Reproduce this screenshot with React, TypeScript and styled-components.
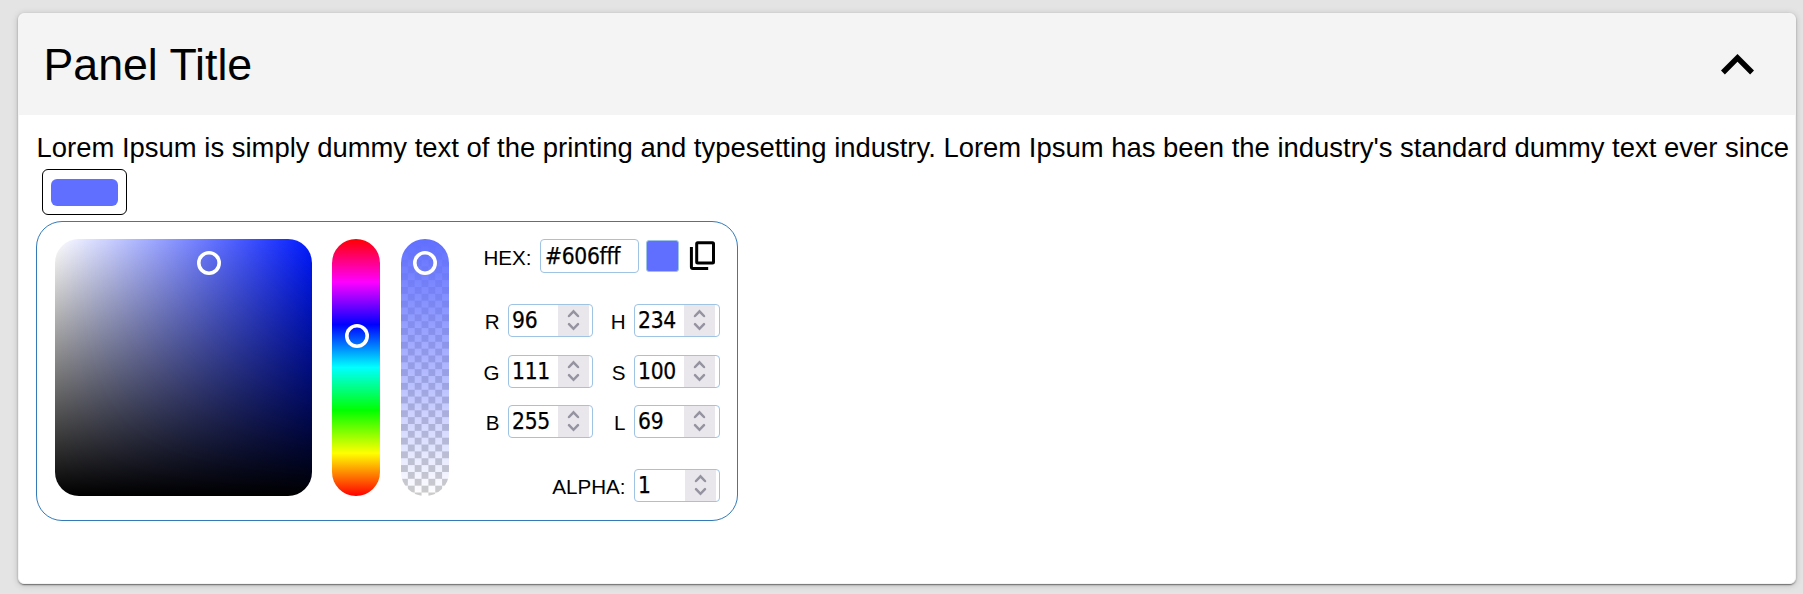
import React from "react";
import styled, { createGlobalStyle } from "styled-components";

const Global = createGlobalStyle`
  * { box-sizing: border-box; }
  html, body { margin: 0; background: #e4e4e4; }
  body { font-family: "Liberation Sans", Arial, sans-serif; color: #000; overflow: hidden; }
`;
const Page = styled.main`
  height: 594px;
  padding: 13px 7px 10px 18px;
`;
const Panel = styled.section`
  height: 571px;
  border: 1px solid #f4f4f4;
  border-radius: 6px;
  background: #fff;
  overflow: hidden;
  box-shadow: 0 4px 1px -3px rgba(0,0,0,.25), 0 1px 2px rgba(0,0,0,.3), 0 1px 7px rgba(0,0,0,.18);
`;
const Header = styled.header`
  height: 101px;
  background: #f4f4f4;
  display: flex;
  align-items: center;
  justify-content: space-between;
  padding: 0 41px 0 24px;
`;
const Title = styled.h1`
  margin: 0;
  padding-left: 0.5px;
  font-size: 44.7px;
  line-height: 50px;
  font-weight: 400;
`;
const Body = styled.div`
  padding: 17px 0 0 17px;
`;
const Text = styled.p`
  margin: 0;
  padding-left: 0.6px;
  font-size: 27.44px;
  line-height: 32px;
  white-space: nowrap;
`;
const ColorButton = styled.button`
  display: flex;
  width: 85px;
  height: 46px;
  margin: 5px 0 6px 6px;
  padding: 9px 8px;
  border: 1px solid #000;
  border-radius: 6px;
  background: #fff;
`;
const ButtonColor = styled.span`
  width: 67px;
  height: 27px;
  border-radius: 6px;
  background: #606fff;
`;
const Picker = styled.div`
  display: flex;
  width: 702px;
  height: 300px;
  padding: 17px 17px 17px 18px;
  border: 1px solid #337ab7;
  border-radius: 26px;
`;
const Track = styled.div<{ $width: number; $gap?: number; $bg: string }>`
  position: relative;
  flex: none;
  width: ${(p) => p.$width}px;
  height: 257px;
  margin-left: ${(p) => p.$gap ?? 0}px;
  border-radius: 24px;
  background: ${(p) => p.$bg};
`;
const Handle = styled.span<{ $x: number; $y: number }>`
  position: absolute;
  left: ${(p) => p.$x - 12.2}px;
  top: ${(p) => p.$y - 12.2}px;
  width: 24.4px;
  height: 24.4px;
  box-shadow: inset 0 0 0 3.6px #fff;
  border-radius: 50%;
`;
const Fields = styled.div`
  flex: 1;
  display: flex;
  flex-direction: column;
`;
const Row = styled.div<{ $mt?: number; $height?: number }>`
  display: flex;
  justify-content: flex-end;
  align-items: center;
  height: ${(p) => p.$height ?? 33}px;
  margin-top: ${(p) => p.$mt ?? 0}px;
`;
const Label = styled.label<{ $width?: number; $drop?: number }>`
  width: ${(p) => (p.$width ? p.$width + "px" : "auto")};
  margin-right: 8.5px;
  padding-top: ${(p) => p.$drop ?? 3}px;
  text-align: right;
  font-size: 20.6px;
  line-height: 24px;
`;
const Box = styled.div<{ $width: number; $height?: number; $left?: number; $right?: number }>`
  display: flex;
  align-items: center;
  justify-content: space-between;
  width: ${(p) => p.$width}px;
  height: ${(p) => p.$height ?? 33}px;
  padding-left: ${(p) => p.$left ?? 3}px;
  padding-right: ${(p) => p.$right ?? 3}px;
  border: 1px solid #9fc3e3;
  border-radius: 4px;
  background: #fff;
  font: 22.6px/31px "DejaVu Sans Condensed", "DejaVu Sans", sans-serif;
  font-stretch: condensed;
  letter-spacing: -0.3px;
  -webkit-text-stroke: 0.25px #000;
`;
const Spinner = styled.span`
  display: flex;
  flex: none;
  width: 31px;
  height: 31px;
  background: #e9e7ec;
`;
const Swatch = styled.span`
  width: 33px;
  height: 32px;
  margin: 0 10px 0 7px;
  border: 1px solid #9fc3e3;
  border-radius: 3px;
  background: #606fff;
`;
const CopyIcon = styled.svg`
  flex: none;
  margin-right: 4px;
`;

const NumberField = ({ label, value, width, right }: { label: string; value: string; width: number; right?: number }) => (
  <>
    <Label $width={label.length > 1 ? undefined : 32.5}>{label}</Label>
    <Box $width={width} $right={right}>
      {value}
      <Spinner>
        <svg width="31" height="31" viewBox="0 0 31 31" fill="none" stroke="#9693a1" strokeWidth="2.5" strokeLinecap="round">
          <path d="M11 11l4.5-4.6L20 11M11 19.2l4.5 4.6 4.5-4.6" />
        </svg>
      </Spinner>
    </Box>
  </>
);

const rows = [
  ["R", "96", "H", "234"],
  ["G", "111", "S", "100"],
  ["B", "255", "L", "69"],
];

export default function App() {
  return (
    <Page>
      <Global />
      <Panel>
        <Header>
          <Title>Panel Title</Title>
          <svg width="33" height="20.4" viewBox="6 8 12 7.41">
            <path d="M7.41 15.41 12 10.83l4.59 4.58L18 14l-6-6-6 6z" />
          </svg>
        </Header>
        <Body>
          <Text>Lorem Ipsum is simply dummy text of the printing and typesetting industry. Lorem Ipsum has been the industry's standard dummy text ever since</Text>
          <ColorButton><ButtonColor /></ColorButton>
          <Picker>
            <Track $width={257} $bg="linear-gradient(to top, #000, transparent), linear-gradient(to right, #fff, #0019ff)">
              <Handle $x={153.7} $y={23.8} />
            </Track>
            <Track $width={48} $gap={20} $bg="linear-gradient(#f00, #f0f 16.67%, #00f 33.33%, #0ff 50%, #0f0 66.67%, #ff0 83.33%, #f00)">
              <Handle $x={24.8} $y={96.8} />
            </Track>
            <Track $width={48} $gap={21} $bg="linear-gradient(#606fff, rgba(96,111,255,0)), repeating-conic-gradient(#ccc 0 25%, #fff 0 50%) 0 0 / 13.714px 13.714px">
              <Handle $x={23.8} $y={23.8} />
            </Track>
            <Fields>
              <Row $height={34}>
                <Label $drop={4}>HEX:</Label>
                <Box $width={99} $height={34} $left={4}>#606fff</Box>
                <Swatch />
                <CopyIcon width="27" height="32" viewBox="0 0 27 32" fill="none" stroke="#000" strokeWidth="3" strokeLinejoin="round">
                  <rect x="7.7" y="2.7" width="16.8" height="20.3" rx="1" />
                  <path d="M2.4 7v20q0 1.4 1.4 1.4h15.4" />
                </CopyIcon>
              </Row>
              {rows.map(([a, av, b, bv], i) => (
                <Row key={a} $mt={i ? 17.5 : 31.4}>
                  <NumberField label={a} value={av} width={85} />
                  <NumberField label={b} value={bv} width={86} right={4} />
                </Row>
              ))}
              <Row $mt={31}>
                <NumberField label="ALPHA:" value="1" width={86} />
              </Row>
            </Fields>
          </Picker>
        </Body>
      </Panel>
    </Page>
  );
}
